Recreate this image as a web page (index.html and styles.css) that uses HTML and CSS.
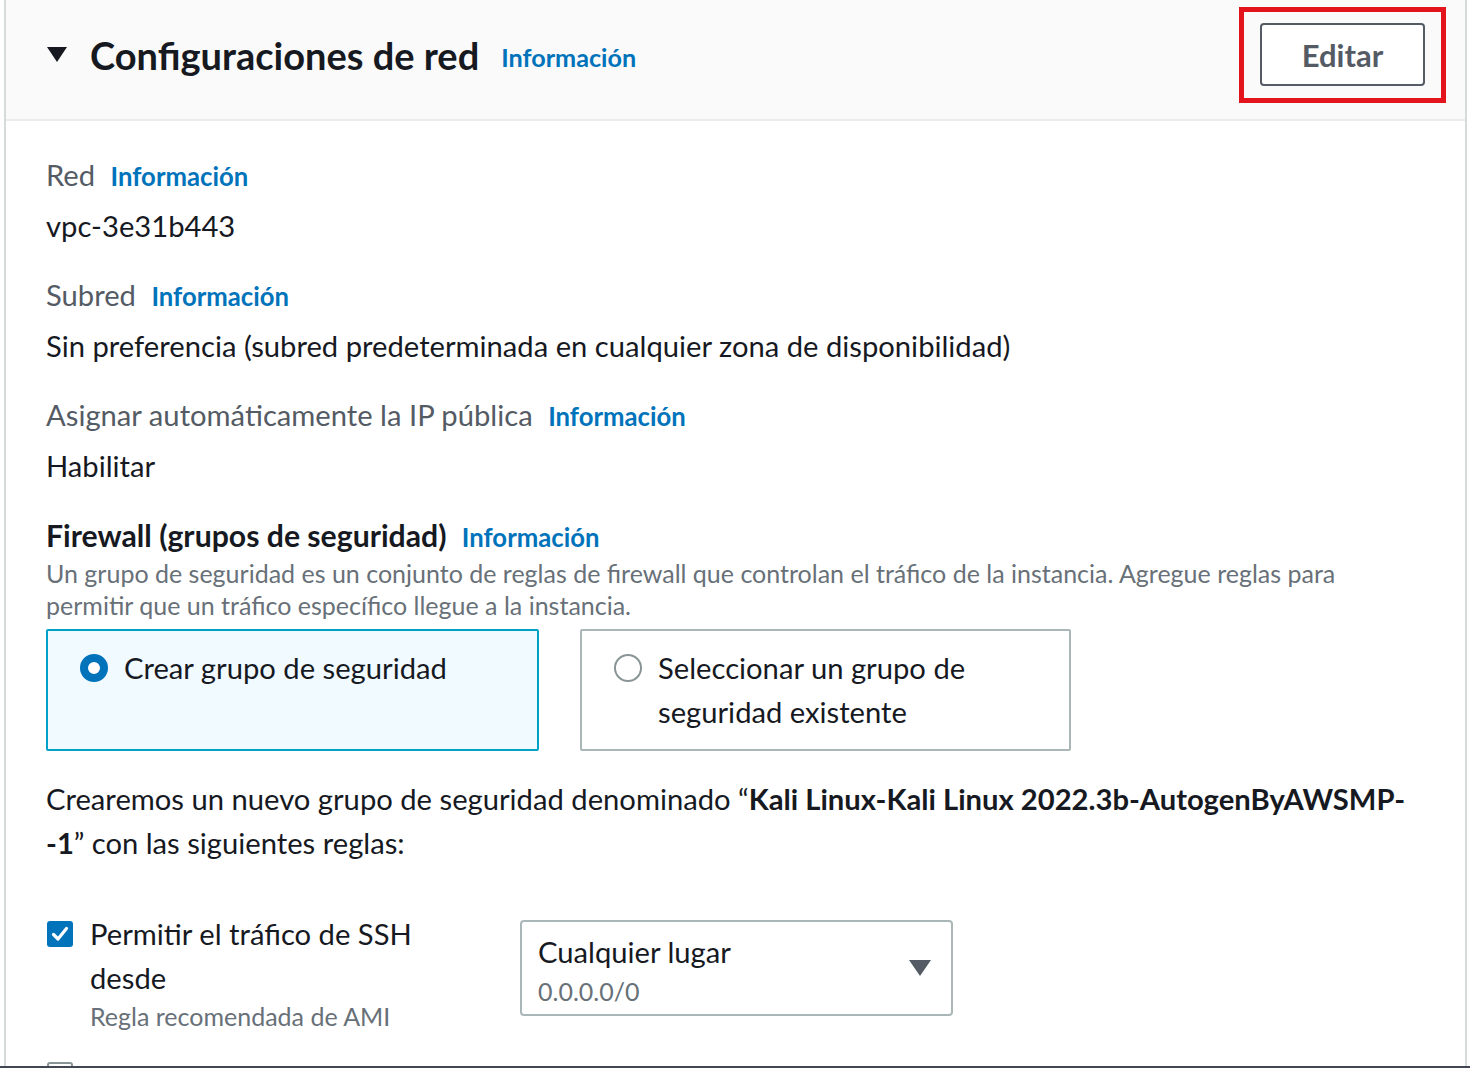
FILE: index.html
```html
<!DOCTYPE html>
<html lang="es">
<head>
<meta charset="utf-8">
<title>Configuraciones de red</title>
<link rel="stylesheet" href="styles.css">
</head>
<body>
<div class="panel">
  <header class="panel-header">
    <span class="caret"></span>
    <h2 class="title">Configuraciones de red</h2>
    <a class="info info-header" href="#">Información</a>
    <div class="edit-wrap">
      <button class="edit-btn">Editar</button>
      <span class="highlight"></span>
    </div>
  </header>
  <section class="panel-body">
    <div class="field">
      <div class="label">Red <a class="info" href="#">Información</a></div>
      <div class="value">vpc-3e31b443</div>
    </div>
    <div class="field">
      <div class="label">Subred <a class="info" href="#">Información</a></div>
      <div class="value">Sin preferencia (subred predeterminada en cualquier zona de disponibilidad)</div>
    </div>
    <div class="field">
      <div class="label">Asignar automáticamente la IP pública <a class="info" href="#">Información</a></div>
      <div class="value">Habilitar</div>
    </div>
    <div class="fw-head">Firewall (grupos de seguridad) <a class="info" href="#">Información</a></div>
    <p class="fw-desc">Un grupo de seguridad es un conjunto de reglas de firewall que controlan el tráfico de la instancia. Agregue reglas para permitir que un tráfico específico llegue a la instancia.</p>
    <div class="tiles">
      <div class="tile tile-selected">
        <span class="radio radio-on"></span>
        <span class="tile-text">Crear grupo de seguridad</span>
      </div>
      <div class="tile">
        <span class="radio"></span>
        <span class="tile-text">Seleccionar un grupo de seguridad existente</span>
      </div>
    </div>
    <p class="note">Crearemos un nuevo grupo de seguridad denominado “<b>Kali Linux-Kali Linux 2022.3b-AutogenByAWSMP-<br>-1</b>” con las siguientes reglas:</p>
    <div class="rule">
      <div class="rule-label">
        <span class="checkbox checked"><svg viewBox="0 0 26 26" width="26" height="26"><path d="M6.5 13.5 L11 18 L19.5 7.5" fill="none" stroke="#fff" stroke-width="3.2" stroke-linecap="round" stroke-linejoin="round"/></svg></span>
        <div class="rule-text">
          <div class="rule-title">Permitir el tráfico de SSH desde</div>
          <div class="rule-sub">Regla recomendada de AMI</div>
        </div>
      </div>
      <div class="select">
        <div class="select-main">Cualquier lugar</div>
        <div class="select-sub">0.0.0.0/0</div>
        <span class="select-caret"></span>
      </div>
    </div>
    <div class="rule">
      <div class="rule-label">
        <span class="checkbox"></span>
      </div>
    </div>
  </section>
</div>
<div class="window-edge"></div>
</body>
</html>
```

FILE: styles.css
```css
* { box-sizing: border-box; }
html, body { margin: 0; padding: 0; }
body {
  width: 1470px;
  height: 1068px;
  overflow: hidden;
  background: #ffffff;
  font-family: Lato, "Open Sans", "Liberation Sans", sans-serif;
  color: #16191f;
}
.panel {
  margin-left: 4px;
  width: 1463px;
  height: 1068px;
  overflow: hidden;
  border-left: 2px solid #d5dbdb;
  border-right: 2px solid #d5dbdb;
}
.panel-header {
  height: 121px;
  background: #fafafa;
  border-bottom: 2px solid #eaeded;
  display: flex;
  align-items: center;
  padding: 0 40px 10px 41px;
}
.caret {
  width: 0;
  height: 0;
  border-left: 10px solid transparent;
  border-right: 10px solid transparent;
  border-top: 15px solid #16191f;
  margin-right: 23px;
}
.title {
  margin: 0;
  font-size: 38px;
  font-weight: 700;
  line-height: 44px;
  color: #16191f;
}
.info {
  color: #0073bb;
  font-weight: 700;
  font-size: 25.7px;
  line-height: 1;
  text-decoration: none;
}
.info-header { margin-left: 22px; margin-top: 6px; font-size: 25.2px; }
.edit-wrap {
  margin-left: auto;
  position: relative;
}
.edit-btn {
  width: 165px;
  height: 63px;
  border: 2px solid #545b64;
  border-radius: 4px;
  background: #ffffff;
  color: #545b64;
  font-family: inherit;
  font-weight: 700;
  font-size: 31px;
  padding: 0;
  display: block;
}
.highlight {
  position: absolute;
  left: -21px;
  top: -16px;
  width: 207px;
  height: 96px;
  border: 5px solid #e3141c;
  pointer-events: none;
}
.panel-body {
  padding: 34px 40px 0 40px;
}
.field { margin-bottom: 29px; }
.label {
  height: 40px;
  font-size: 29.2px;
  line-height: 40px;
  color: #545b64;
}
.label .info { margin-left: 8px; }
.value {
  margin-top: 11px;
  font-size: 29.2px;
  line-height: 40px;
  color: #16191f;
}
.fw-head {
  height: 40px;
  font-size: 30.2px;
  line-height: 40px;
  font-weight: 700;
}
.fw-head .info { margin-left: 8px; }
.fw-desc {
  margin: 2px 0 0 0;
  font-size: 25px;
  line-height: 32px;
  color: #687078;
  max-width: 1320px;
}
.tiles {
  margin-top: 8px;
  display: grid;
  grid-template-columns: 493px 491px;
  column-gap: 41px;
}
.tile {
  height: 122px;
  border: 2px solid #aab7b8;
  border-radius: 2px;
  padding: 15px 20px 0 32px;
  display: flex;
  align-items: flex-start;
  gap: 16px;
  background: #ffffff;
}
.tile-selected {
  border-color: #00a1c9;
  background: #f1faff;
}
.radio {
  flex: none;
  width: 28px;
  height: 28px;
  border-radius: 50%;
  border: 2px solid #879596;
  margin-top: 8px;
  background: #ffffff;
}
.radio-on {
  border: 8px solid #0073bb;
}
.tile-text {
  font-size: 29.2px;
  line-height: 44px;
}
.note {
  margin: 26px 0 0 0;
  font-size: 29.2px;
  line-height: 44px;
}
.note b { font-weight: 700; }
.rule {
  margin-top: 47px;
  display: grid;
  grid-template-columns: 474px 433px;
  align-items: start;
}
.rule + .rule { margin-top: 21px; }
.rule-label {
  display: flex;
  align-items: flex-start;
  gap: 17px;
}
.checkbox {
  flex: none;
  width: 26px;
  height: 26px;
  margin-left: 1px;
  margin-top: 9px;
  border-radius: 3px;
  border: 2px solid #879596;
  background: #ffffff;
  display: block;
}
.checkbox.checked {
  border: none;
  background: #0073bb;
}
.checkbox svg { display: block; }
.rule-text { width: 345px; }
.rule-title {
  font-size: 29.2px;
  line-height: 44px;
}
.rule-sub {
  font-size: 25px;
  line-height: 32px;
  color: #687078;
}
.select {
  position: relative;
  margin-top: 8px;
  height: 96px;
  border: 2px solid #aab7b8;
  border-radius: 4px;
  padding: 10px 16px 0 16px;
}
.select-main {
  font-size: 29.2px;
  line-height: 40px;
}
.select-sub {
  margin-top: 3px;
  font-size: 25px;
  line-height: 32px;
  color: #687078;
}
.select-caret {
  position: absolute;
  right: 20px;
  top: 38px;
  width: 0;
  height: 0;
  border-left: 11px solid transparent;
  border-right: 11px solid transparent;
  border-top: 16px solid #545b64;
}
.window-edge {
  position: fixed;
  left: 0;
  right: 0;
  bottom: 0;
  height: 2px;
  background: #414750;
}
```
